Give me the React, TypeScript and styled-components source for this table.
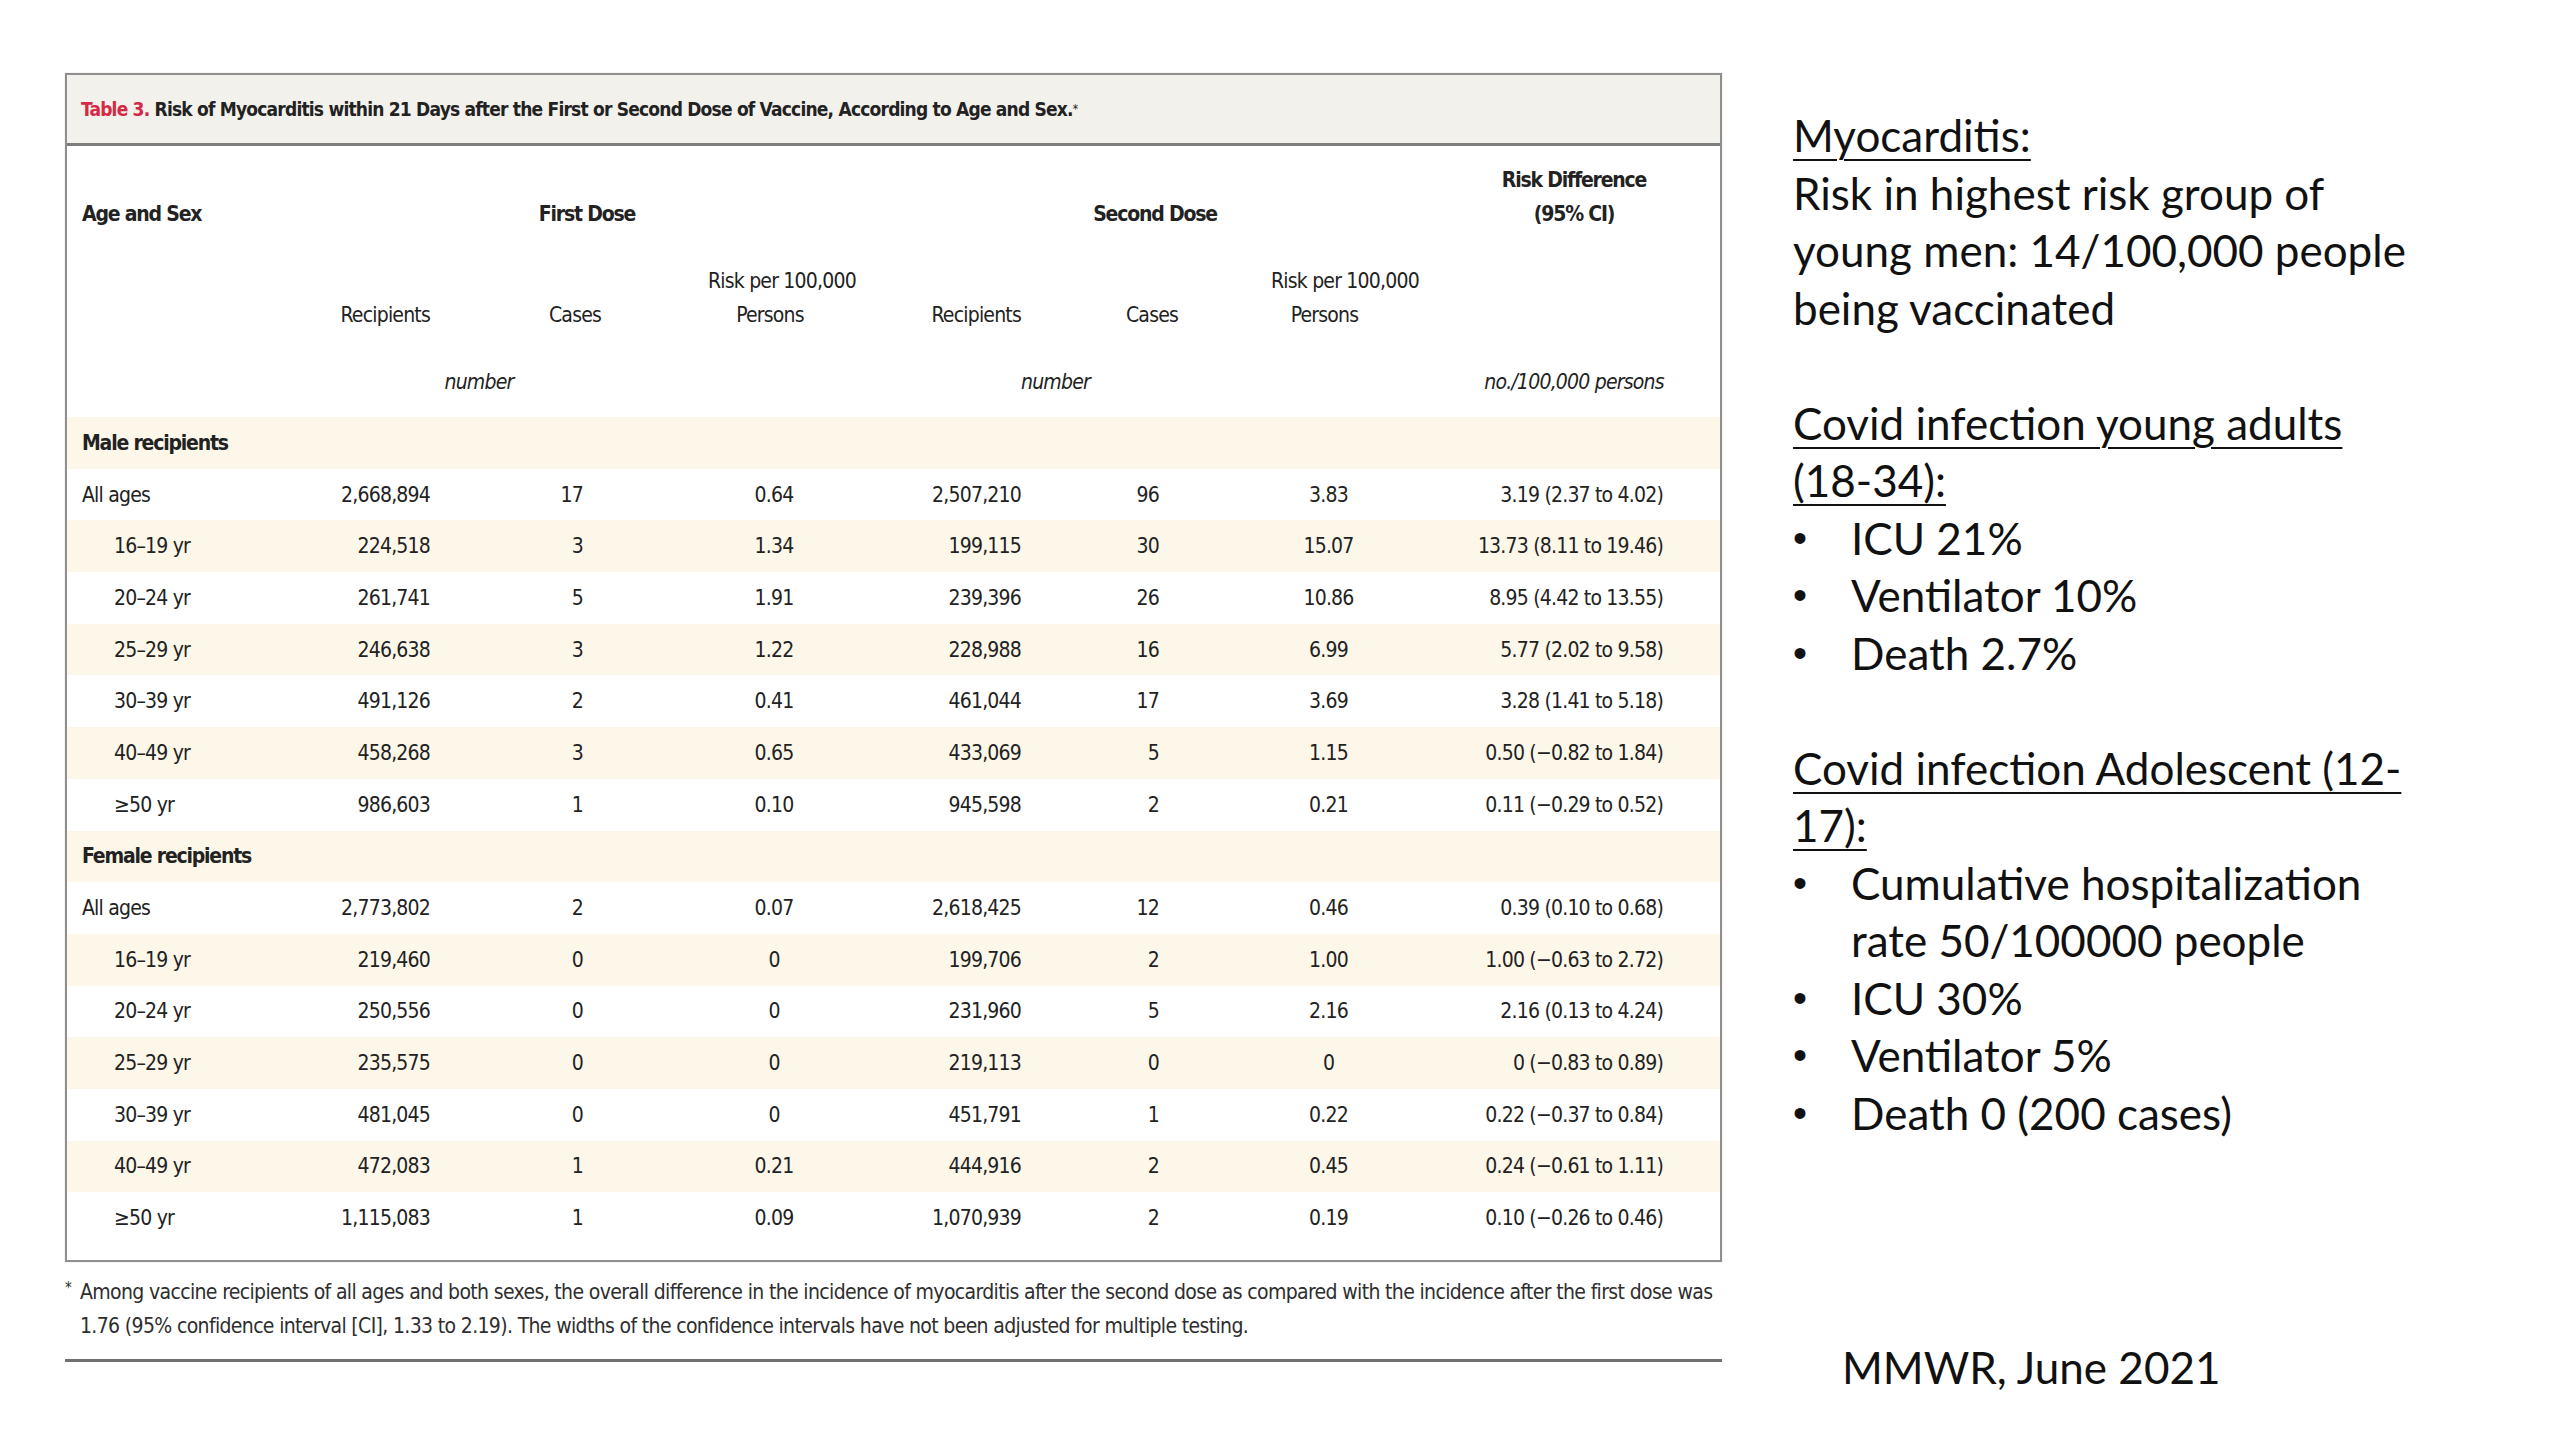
import React from 'react';
import styled, { createGlobalStyle } from 'styled-components';

const Global = createGlobalStyle`
  html, body { margin: 0; padding: 0; background: #ffffff; }
  body { width: 2560px; height: 1440px; overflow: hidden; }
`;

const TFONT = `"DejaVu Sans Condensed", "DejaVu Sans", sans-serif`;
const COLS = '235px 140px 266px 132px 193px 238px 157px 292px';

const Slide = styled.div`
  width: 2560px;
  height: 1440px;
  box-sizing: border-box;
  padding: 73px 0 0 65px;
  display: flex;
  align-items: flex-start;
  gap: 71px;
`;

const Left = styled.div`
  width: 1657px;
  display: flex;
  flex-direction: column;
  font-family: ${TFONT};
  color: #222222;
`;

const TableBox = styled.div`
  border: 2px solid #8f8f8f;
  box-shadow: 0 0 1px #bbb;
  display: flex;
  flex-direction: column;
  padding-bottom: 16px;
`;

const TitleBar = styled.div`
  height: 68px;
  background: #f3f1ec;
  border-bottom: 3px solid #7d7d7d;
  display: flex;
  align-items: center;
  padding-left: 14px;
  font-size: 19px;
  font-weight: bold;
  letter-spacing: -0.8px;
  white-space: nowrap;
`;

const Red = styled.span`
  color: #d42a46;
`;

const Sup = styled.sup`
  font-size: 12px;
  font-weight: normal;
  vertical-align: 7px;
`;

const Header = styled.div`
  display: flex;
  flex-direction: column;
  gap: 33px;
  padding: 17px 0 18px;
`;

const Grid = styled.div<{ $band?: boolean; $h?: number }>`
  display: grid;
  grid-template-columns: ${COLS};
  align-items: end;
  font-size: 21px;
  line-height: 34px;
  ${(p) => (p.$h ? `height: ${p.$h}px; align-items: center;` : '')}
  background: ${(p) => (p.$band ? '#fcf7e9' : 'transparent')};
`;

const Cell = styled.div<{
  $align?: 'left' | 'right' | 'center';
  $pl?: number;
  $pr?: number;
  $span?: number;
  $bold?: boolean;
  $italic?: boolean;
}>`
  text-align: ${(p) => p.$align || 'left'};
  padding-left: ${(p) => p.$pl || 0}px;
  padding-right: ${(p) => p.$pr || 0}px;
  grid-column: ${(p) => (p.$span ? `span ${p.$span}` : 'auto')};
  font-weight: ${(p) => (p.$bold ? 'bold' : 'normal')};
  font-style: ${(p) => (p.$italic ? 'italic' : 'normal')};
  letter-spacing: ${(p) => (p.$bold ? '-1.2px' : '-0.8px')};
  white-space: nowrap;
`;

const Footnote = styled.div`
  display: flex;
  padding-top: 13px;
  padding-bottom: 16px;
  border-bottom: 3px solid #707070;
  font-size: 21px;
  line-height: 34px;
  letter-spacing: -0.65px;
  color: #2e2e2e;
`;

const Star = styled.span`
  width: 15px;
  flex: none;
  font-size: 15px;
  line-height: 26px;
`;

const FootLines = styled.div`
  white-space: nowrap;
`;

const Right = styled.div`
  display: flex;
  flex-direction: column;
  padding-top: 34px;
  font-family: Lato, "Open Sans", sans-serif;
  font-size: 44px;
  line-height: 57.5px;
  color: #111;
  width: 700px;
`;

const Heading = styled.div`
  text-decoration: underline;
  text-decoration-thickness: 2px;
  text-underline-offset: 7px;
`;

const Line = styled.div``;

const Blank = styled.div`
  height: 57.5px;
`;

const Bullet = styled.div`
  display: grid;
  grid-template-columns: 58px 1fr;
`;

const Dot = styled.span`
  font-family: "Liberation Sans", Arial, sans-serif;
  font-size: 40px;
`;

const Source = styled.div`
  margin-top: 197px;
  padding-left: 49px;
`;

type Row = { label: string; sub?: boolean; group?: boolean; v?: string[] };

const rows: Row[] = [
  { label: 'Male recipients', group: true },
  { label: 'All ages', v: ['2,668,894', '17', '0.64', '2,507,210', '96', '3.83', '3.19 (2.37 to 4.02)'] },
  { label: '16–19 yr', sub: true, v: ['224,518', '3', '1.34', '199,115', '30', '15.07', '13.73 (8.11 to 19.46)'] },
  { label: '20–24 yr', sub: true, v: ['261,741', '5', '1.91', '239,396', '26', '10.86', '8.95 (4.42 to 13.55)'] },
  { label: '25–29 yr', sub: true, v: ['246,638', '3', '1.22', '228,988', '16', '6.99', '5.77 (2.02 to 9.58)'] },
  { label: '30–39 yr', sub: true, v: ['491,126', '2', '0.41', '461,044', '17', '3.69', '3.28 (1.41 to 5.18)'] },
  { label: '40–49 yr', sub: true, v: ['458,268', '3', '0.65', '433,069', '5', '1.15', '0.50 (−0.82 to 1.84)'] },
  { label: '≥50 yr', sub: true, v: ['986,603', '1', '0.10', '945,598', '2', '0.21', '0.11 (−0.29 to 0.52)'] },
  { label: 'Female recipients', group: true },
  { label: 'All ages', v: ['2,773,802', '2', '0.07', '2,618,425', '12', '0.46', '0.39 (0.10 to 0.68)'] },
  { label: '16–19 yr', sub: true, v: ['219,460', '0', '0', '199,706', '2', '1.00', '1.00 (−0.63 to 2.72)'] },
  { label: '20–24 yr', sub: true, v: ['250,556', '0', '0', '231,960', '5', '2.16', '2.16 (0.13 to 4.24)'] },
  { label: '25–29 yr', sub: true, v: ['235,575', '0', '0', '219,113', '0', '0', '0 (−0.83 to 0.89)'] },
  { label: '30–39 yr', sub: true, v: ['481,045', '0', '0', '451,791', '1', '0.22', '0.22 (−0.37 to 0.84)'] },
  { label: '40–49 yr', sub: true, v: ['472,083', '1', '0.21', '444,916', '2', '0.45', '0.24 (−0.61 to 1.11)'] },
  { label: '≥50 yr', sub: true, v: ['1,115,083', '1', '0.09', '1,070,939', '2', '0.19', '0.10 (−0.26 to 0.46)'] },
];

const bodyCols: { align: 'left' | 'right' | 'center'; pr?: number }[] = [
  { align: 'right', pr: 12 },
  { align: 'right', pr: 125 },
  { align: 'center' },
  { align: 'right', pr: 12 },
  { align: 'right', pr: 112 },
  { align: 'center', pr: 42 },
  { align: 'right', pr: 57 },
];

export default function App() {
  return (
    <>
      <Global />
      <Slide>
        <Left>
          <TableBox>
            <TitleBar>
              <Red>Table 3.</Red>&nbsp;Risk of Myocarditis within 21 Days after the First or Second Dose of Vaccine, According to Age and Sex.
              <Sup>*</Sup>
            </TitleBar>
            <Header>
              <Grid>
                <Cell $bold $pl={15}>Age and Sex</Cell>
                <Cell $bold $span={3} $align="center" $pl={32}>First Dose</Cell>
                <Cell $bold $span={3} $align="center" $pl={42}>Second Dose</Cell>
                <Cell $bold $align="center">
                  Risk Difference
                  <br />
                  (95% CI)
                </Cell>
              </Grid>
              <Grid>
                <Cell />
                <Cell $align="right" $pr={12}>Recipients</Cell>
                <Cell $align="center">Cases</Cell>
                <Cell $align="center" $pr={8}>
                  Risk per 100,000
                  <br />
                  Persons
                </Cell>
                <Cell $align="right" $pr={12}>Recipients</Cell>
                <Cell $align="center">Cases</Cell>
                <Cell $align="center" $pr={50}>
                  Risk per 100,000
                  <br />
                  Persons
                </Cell>
                <Cell />
              </Grid>
              <Grid>
                <Cell />
                <Cell $span={2} $align="center" $pr={52} $italic>number</Cell>
                <Cell />
                <Cell $span={2} $align="center" $italic>number</Cell>
                <Cell />
                <Cell $align="center" $italic>no./100,000 persons</Cell>
              </Grid>
            </Header>
            {rows.map((r, i) => (
              <Grid key={i} $band={i % 2 === 0} $h={51.7}>
                <Cell $bold={r.group} $pl={r.sub ? 47 : 15}>{r.label}</Cell>
                {r.v
                  ? r.v.map((val, j) => (
                      <Cell key={j} $align={bodyCols[j].align} $pr={bodyCols[j].pr}>
                        {val}
                      </Cell>
                    ))
                  : null}
              </Grid>
            ))}
          </TableBox>
          <Footnote>
            <Star>*</Star>
            <FootLines>
              Among vaccine recipients of all ages and both sexes, the overall difference in the incidence of myocarditis after the second dose as compared with the incidence after the first dose was
              <br />
              1.76 (95% confidence interval [CI], 1.33 to 2.19). The widths of the confidence intervals have not been adjusted for multiple testing.
            </FootLines>
          </Footnote>
        </Left>
        <Right>
          <Heading>Myocarditis:</Heading>
          <Line>Risk in highest risk group of</Line>
          <Line>young men: 14/100,000 people</Line>
          <Line>being vaccinated</Line>
          <Blank />
          <Heading>Covid infection young adults</Heading>
          <Heading>(18-34):</Heading>
          <Bullet><Dot>•</Dot><span>ICU 21%</span></Bullet>
          <Bullet><Dot>•</Dot><span>Ventilator 10%</span></Bullet>
          <Bullet><Dot>•</Dot><span>Death 2.7%</span></Bullet>
          <Blank />
          <Heading>Covid infection Adolescent (12-</Heading>
          <Heading>17):</Heading>
          <Bullet><Dot>•</Dot><span>Cumulative hospitalization<br />rate 50/100000 people</span></Bullet>
          <Bullet><Dot>•</Dot><span>ICU 30%</span></Bullet>
          <Bullet><Dot>•</Dot><span>Ventilator 5%</span></Bullet>
          <Bullet><Dot>•</Dot><span>Death 0 (200 cases)</span></Bullet>
          <Source>MMWR, June 2021</Source>
        </Right>
      </Slide>
    </>
  );
}
